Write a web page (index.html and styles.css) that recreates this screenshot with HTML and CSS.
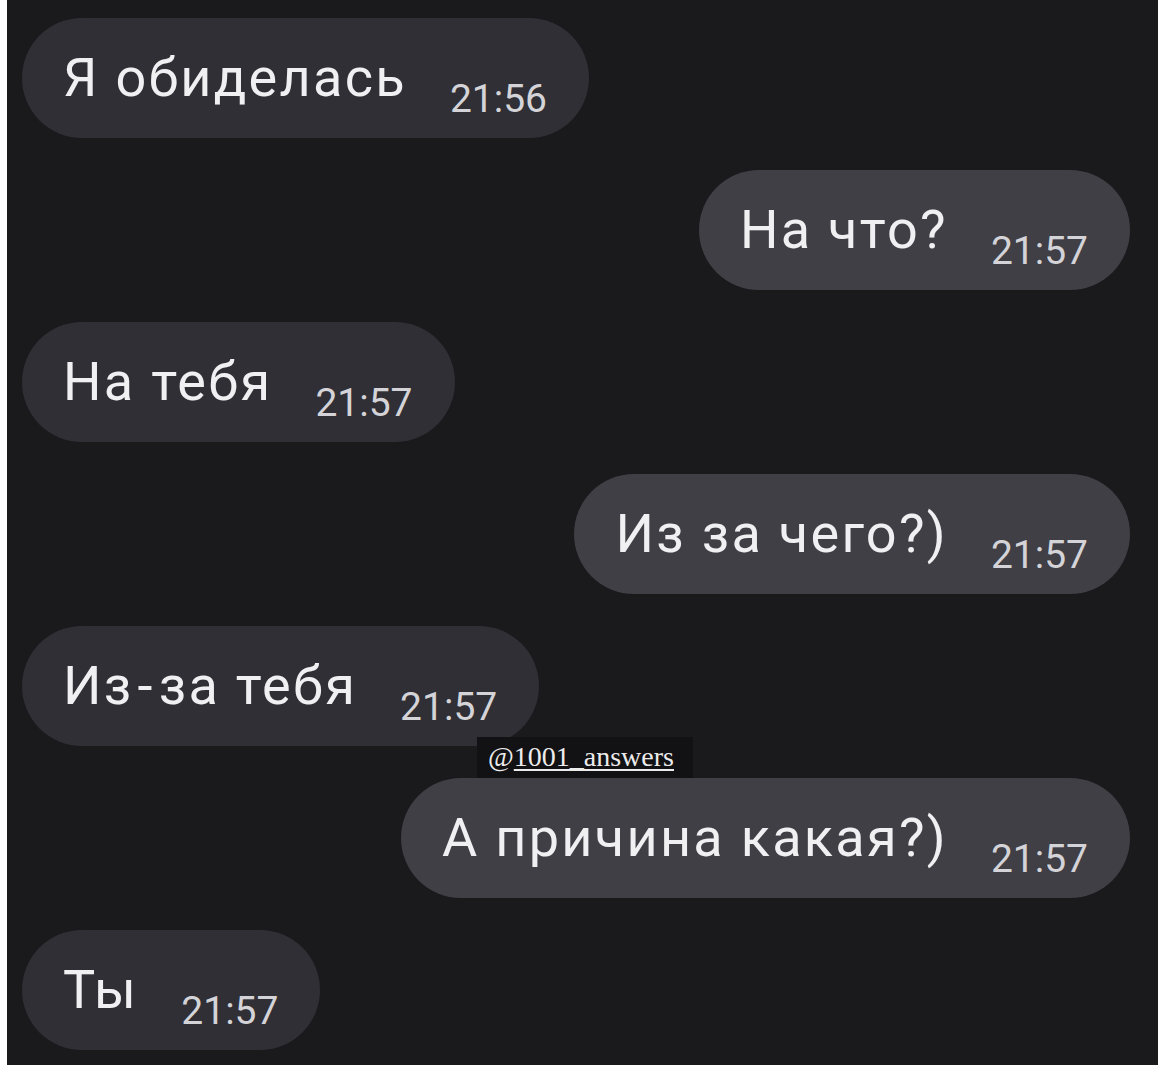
FILE: index.html
```html
<!DOCTYPE html>
<html lang="ru">
<head>
    <meta charset="UTF-8">
    <meta name="viewport" content="width=device-width, initial-scale=1.0">
    <title>Переписка</title>
    <link rel="stylesheet" href="styles.css">
</head>

<body>
    <div class="chat sans">
        <div class="bubble in"><span class="msg-text">Я обиделась</span><span class="msg-time">21:56</span></div>
        <div class="bubble out"><span class="msg-text">На что?</span><span class="msg-time">21:57</span></div>
        <div class="bubble in"><span class="msg-text">На тебя</span><span class="msg-time">21:57</span></div>
        <div class="bubble out"><span class="msg-text">Из за чего?)</span><span class="msg-time">21:57</span></div>
        <div class="bubble in"><span class="msg-text">Из<span class="dash">-</span>за тебя</span><span class="msg-time">21:57</span></div>
        <div class="bubble out"><span class="msg-text">А причина какая?)</span><span class="msg-time">21:57</span></div>
        <div class="bubble in"><span class="msg-text">Ты</span><span class="msg-time">21:57</span></div>

        <div class="watermark serif">@<u>1001_answers</u></div>
    </div>
</body>

</html>
```

FILE: styles.css
```css
/* Presets */
html,
body {
    margin: 0;
    background: #fff;
}

.sans {
    font-family: Roboto, 'Liberation Sans', sans-serif;
}

.serif {
    font-family: 'Liberation Serif', 'Times New Roman', serif;
}

/* Chat */
.chat {
    position: relative;
    height: 1065px;
    box-sizing: border-box;
    margin: 0 12px 0 7px;
    padding: 18px 28px 0 15px;
    background: #1a191c;
    display: flex;
    flex-direction: column;
    gap: 32px;
}

.bubble {
    height: 120px;
    box-sizing: border-box;
    padding: 0 42px 0 41px;
    border-radius: 60px;
    line-height: 120px;
    white-space: nowrap;
    width: fit-content;
}

.bubble.in {
    align-self: flex-start;
    background: #302f35;
}

.bubble.out {
    align-self: flex-end;
    background: #403f45;
}

.msg-text {
    font-size: 54px;
    letter-spacing: 2.3px;
    color: #f0f0f2;
    margin-right: 43px;
}

.msg-text .dash {
    margin: 0 4px;
}

.msg-time {
    font-size: 39px;
    color: #d4d4d8;
    vertical-align: -16px;
}

/* Watermark */
.watermark {
    position: absolute;
    left: 470px;
    top: 737px;
    width: 216px;
    height: 41px;
    box-sizing: border-box;
    padding: 4px 0 0 11px;
    background: #121113;
    color: #ececec;
    font-size: 28px;
    line-height: 32px;
}

.watermark u {
    text-decoration-thickness: 2px;
    text-underline-offset: 3px;
}
```
